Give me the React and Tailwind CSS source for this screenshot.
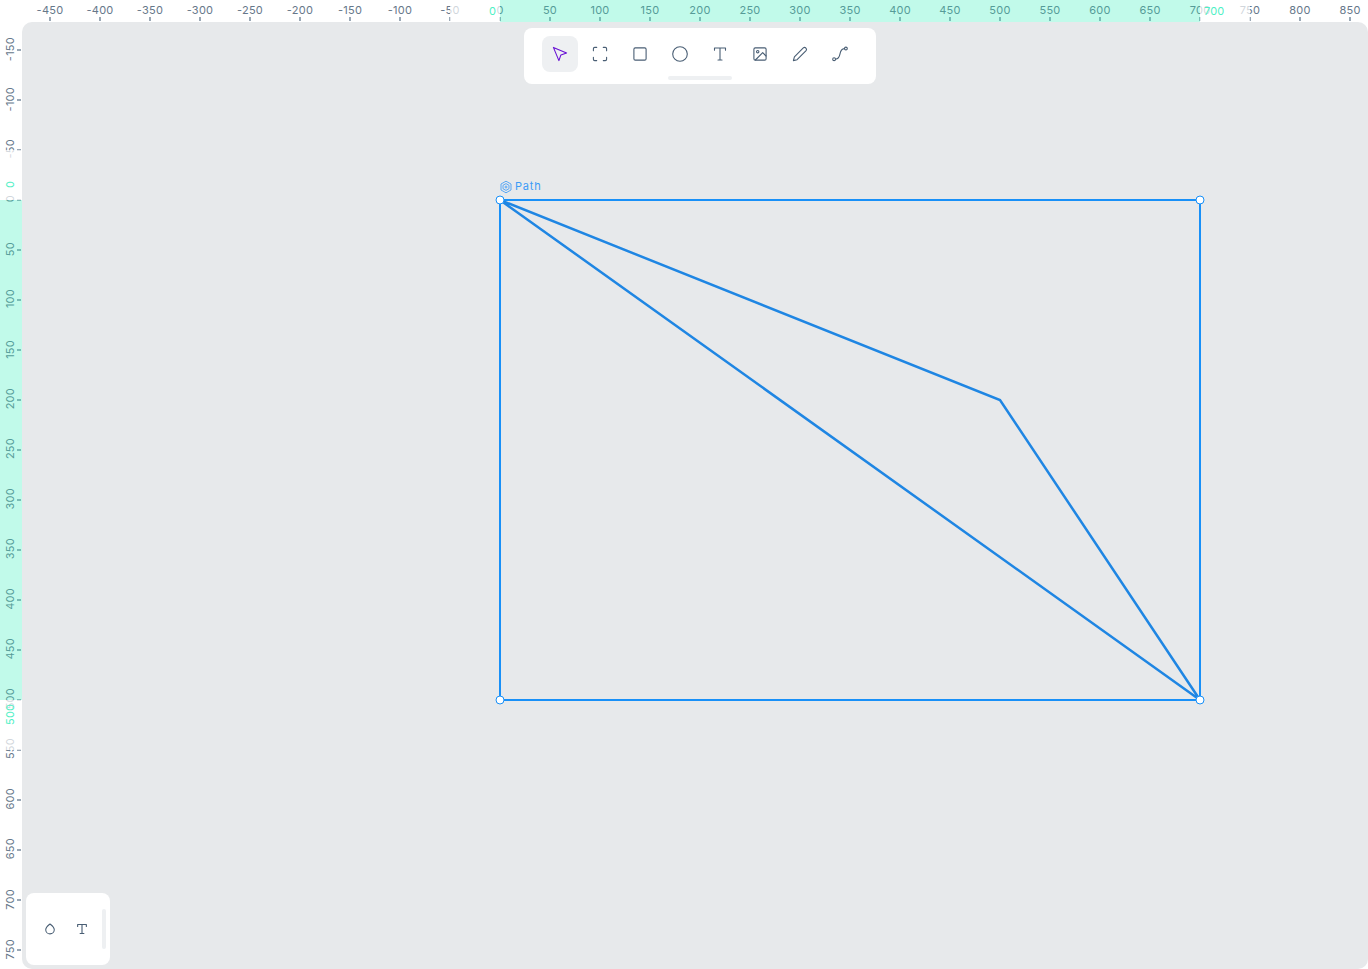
import React from 'react';

const X_MARKS = Array.from({ length: 27 }, (_, i) => -450 + i * 50);
const Y_MARKS = Array.from({ length: 19 }, (_, i) => -150 + i * 50);

function TopRuler() {
  return (
    <div className="relative h-[22px] w-full overflow-hidden bg-white">
      <div className="ml-[25px] flex w-[1350px]">
        {X_MARKS.map((m) => (
          <div key={m} className="flex h-[22px] w-[50px] shrink-0 flex-col items-center pt-[3px]">
            <span className="h-[14px] text-[11px] leading-[14px] tracking-[0.25px] text-[#66778a]">{m}</span>
            <span className="h-[4px] w-[2px] bg-[#9aa8b6]" />
          </div>
        ))}
      </div>
      <div className="absolute left-[450px] top-0 h-[22px] w-[50px] bg-white/70" />
      <div className="absolute left-[1200px] top-0 h-[22px] w-[50px] bg-white/70" />
      <div className="absolute left-[500px] top-0 h-[22px] w-[700px] bg-[#31efb8]/30" />
      <span className="absolute left-[489px] top-[4px] text-[11px] leading-[14px] text-[#4ff0c5]">0</span>
      <span className="absolute left-[1204px] top-[4px] text-[11px] leading-[14px] tracking-[0.1px] text-[#4ff0c5]">700</span>
    </div>
  );
}

function LeftRuler() {
  return (
    <div className="relative h-[947px] w-[22px] shrink-0 overflow-hidden bg-white">
      <div className="flex flex-col pt-[3px]">
        {Y_MARKS.map((m) => (
          <div key={m} className="flex h-[50px] w-[22px] shrink-0 items-center pl-[3px]">
            <span className="mb-[2px] flex w-[14px] rotate-180 justify-center text-[11px] leading-[14px] tracking-[0.25px] text-[#66778a] [writing-mode:vertical-rl]">{m}</span>
            <span className="h-[2px] w-[4px] bg-[#9aa8b6]" />
          </div>
        ))}
      </div>
      <div className="absolute left-0 top-[128px] h-[50px] w-[22px] bg-white/70" />
      <div className="absolute left-0 top-[678px] h-[50px] w-[22px] bg-white/70" />
      <div className="absolute left-0 top-[178px] h-[500px] w-[22px] bg-[#31efb8]/30" />
      <span className="absolute left-[3px] top-[159px] rotate-180 text-[11px] leading-[14px] text-[#4ff0c5] [writing-mode:vertical-rl]">0</span>
      <span className="absolute left-[3px] top-[682px] rotate-180 text-[11px] leading-[14px] tracking-[0.1px] text-[#4ff0c5] [writing-mode:vertical-rl]">500</span>
    </div>
  );
}

function Icon({ size = 16, children }) {
  return (
    <svg width={size} height={size} viewBox="0 0 16 16" fill="none" stroke="currentColor" strokeWidth="1.1" strokeLinecap="round" strokeLinejoin="round">
      {children}
    </svg>
  );
}

const TOOLS = [
  { id: 'move', art: <path d="m1.4 1.4 13.2 5.5-5.7 2-2 5.7z" /> },
  { id: 'board', art: <path d="M1.4 4.7V2.7c0-.8.6-1.3 1.3-1.3h2M11.3 1.4h2c.8 0 1.3.6 1.3 1.3v2M14.6 11.3v2c0 .8-.6 1.3-1.3 1.3h-2M4.7 14.6h-2c-.8 0-1.3-.6-1.3-1.3v-2" /> },
  { id: 'rectangle', art: <rect x="1.9" y="1.9" width="12.2" height="12.2" rx="1.4" /> },
  { id: 'ellipse', art: <circle cx="8" cy="8" r="7.3" /> },
  { id: 'text', art: <path d="M2.5 4.2V2h11v2.2M8 2v12M6 14h4" /> },
  { id: 'image', art: <><rect x="1.9" y="1.9" width="12.2" height="12.2" rx="1.4" /><circle cx="5.7" cy="5.7" r="1.2" /><path d="m14 10-3.3-3.3L3.4 14" /></> },
  { id: 'pencil', art: <path d="M11.3 1.9a2 2 0 0 1 2.8 2.8L5.1 13.7 1.4 14.6l1-3.7z" /> },
  { id: 'path', art: <><circle cx="2.1" cy="13.2" r="1.4" /><circle cx="13.9" cy="2.5" r="1.4" /><path d="M3.6 13.1C10.5 12.8 5.5 2.9 12.4 2.6" /></> },
];

function Toolbar() {
  return (
    <div className="absolute left-[502px] top-[6px] flex h-[56px] w-[352px] flex-col items-center rounded-lg bg-white pt-2">
      <div className="flex w-full gap-1 pl-[18px]">
        {TOOLS.map((t, i) => (
          <button key={t.id} aria-label={t.id} className={i === 0 ? 'flex size-9 items-center justify-center rounded-lg bg-[#eef0f2] text-[#6911d4]' : 'flex size-9 items-center justify-center rounded-lg text-[#495e74]'}>
            <Icon>{t.art}</Icon>
          </button>
        ))}
      </div>
      <div className="mt-1 h-1 w-16 rounded-full bg-[#eef0f2]" />
    </div>
  );
}

function Palette() {
  return (
    <div className="absolute left-[4px] top-[871px] flex h-[72px] w-[84px] items-center rounded-lg bg-white pl-[18px] text-[#495e74]">
      <button aria-label="colors" className="flex size-3 items-center justify-center">
        <Icon size={12}><path strokeWidth="1.4" d="M8 1.3c3 2.2 5.7 4.6 5.7 7.7a5.7 5.5 0 0 1-11.4 0C2.3 5.9 5 3.5 8 1.3z" /></Icon>
      </button>
      <button aria-label="typographies" className="ml-5 flex size-3 items-center justify-center">
        <Icon size={12}><path strokeWidth="1.5" d="M2.2 4.5V2h11.6v2.5M8 2v12M5.5 14h5" /></Icon>
      </button>
      <div className="ml-[14px] h-10 w-1 rounded-full bg-[#eef0f2]" />
    </div>
  );
}

const HANDLES = [[478, 178], [1178, 178], [478, 678], [1178, 678]];

function Canvas() {
  return (
    <svg className="block" width="1346" height="947" viewBox="0 0 1346 947" fill="none">
      <path d="M478 178 978 378l200 300z" stroke="#1f86e3" strokeWidth="2.5" />
      <rect x="478" y="178" width="700" height="500" stroke="#1890f8" strokeWidth="2" />
      {HANDLES.map(([x, y]) => (
        <circle key={x + '-' + y} cx={x} cy={y} r="4" fill="#fff" stroke="#1890f8" />
      ))}
      <g stroke="#4a9ff5" strokeWidth="0.9">
        <circle cx="484" cy="165" r="1" />
        <path d="m484 159.2 5 2.8v6l-5 2.8-5-2.8v-6z" />
        <path d="m484 161.6 3 1.7v3.4l-3 1.7-3-1.7v-3.4z" />
      </g>
      <text x="493" y="168" fontSize="11" letterSpacing="0.8" fill="#3b9bf7">Path</text>
    </svg>
  );
}

export default function App() {
  return (
    <div className="h-[969px] w-[1368px] overflow-hidden bg-white font-['Inter','Liberation_Sans',sans-serif]">
      <TopRuler />
      <div className="flex">
        <LeftRuler />
        <main className="relative h-[947px] w-[1346px] overflow-hidden rounded-[10px] bg-[#e7e9eb]">
          <Canvas />
          <Toolbar />
          <Palette />
        </main>
      </div>
    </div>
  );
}
